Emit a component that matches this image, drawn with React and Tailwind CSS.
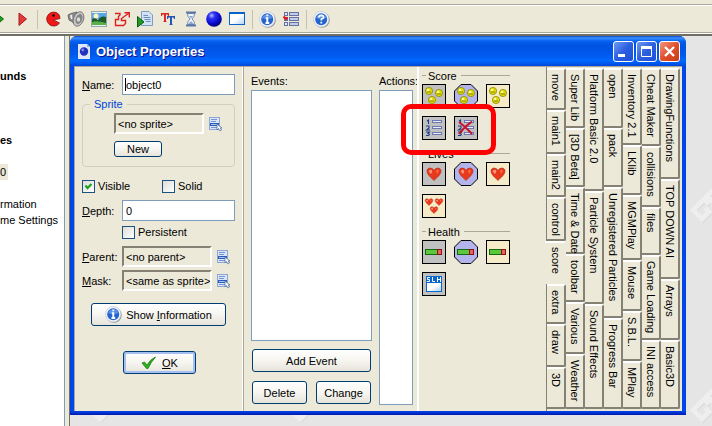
import React from "react";

/* ---------- toolbar drawings ---------- */

const Play = ({ fill, stroke }) => (
  <svg width="16" height="16" viewBox="0 0 16 16"><path d="M5 2 L12.500 8 L5 14.500 Z" fill={fill} stroke={stroke} /></svg>
);

const Pacman = () => (
  <svg width="16" height="16" viewBox="0 0 16 16">
    <path d="M13.500 3 A7 7 0 1 0 14.500 12 L8.500 9 L15 7.500 Q15 5 13.500 3 Z" fill="#f01818" stroke="#8a1010" strokeWidth="0.800" />
    <circle cx="8.500" cy="4.500" r="1.300" fill="#111" />
  </svg>
);

const Speaker = () => (
  <svg width="18" height="18" viewBox="0 0 18 18">
    <path d="M1 5 L4 3.500 L10 2 L8 14 L4 11 L2 10 Z" fill="#8c8c8c" stroke="#5a5a5a" strokeWidth="0.800" />
    <path d="M3 5.500 L5 4.500 L5.500 9 L4 9 Z" fill="#ededed" />
    <ellipse cx="11.500" cy="9" rx="5" ry="7.500" transform="rotate(22 11.500 9)" fill="#c6c6c6" stroke="#6a6a6a" strokeWidth="0.800" />
    <ellipse cx="12" cy="9" rx="3.200" ry="5.200" transform="rotate(22 12 9)" fill="#858585" />
    <ellipse cx="11.500" cy="9.500" rx="1.600" ry="2.200" fill="#dedede" />
  </svg>
);

const Picture = () => (
  <svg width="16" height="16" viewBox="0 0 16 16">
    <rect x="0.500" y="0.500" width="15" height="15" fill="#e8f0f4" stroke="#9aa8a8" />
    <rect x="1" y="2" width="14" height="6" fill="#58a8e8" />
    <circle cx="5" cy="5" r="2.500" fill="#fbf6c0" />
    <path d="M1 8 Q4 6 7 9 Q10 4 15 6 V12 H1 Z" fill="#1c5a2c" />
    <path d="M1 11 Q6 9 15 12 V14 H1 Z" fill="#58b048" />
  </svg>
);

const PathIcon = () => (
  <svg width="18" height="18" viewBox="0 0 18 18" fill="none" stroke="#e02020" strokeWidth="1.400">
    <path d="M2 3.500 H7 V5 L5.500 6.500 V9.500 H2.500 V15.500 H10.500 L12.500 13.500 V10.500 H8.500 V8.500 L16 3" />
    <path d="M11.500 2.700 H16.300 V7.500" />
  </svg>
);

const Script = () => (
  <svg width="16" height="18" viewBox="0 0 16 18">
    <path d="M4.500 1.500 H12 L15.500 5 V15.500 H4.500 Z" fill="#d4e2f6" stroke="#7d9cc4" />
    <path d="M6.500 5.500 H11 M6.500 7.500 H13.500 M7.500 9.500 H13.500 M9 11.500 H13.500" stroke="#6c8dbb" />
    <path d="M0.500 6.500 L7 12 L0.500 17 Z" fill="#1f9a22" stroke="#0d5a12" />
  </svg>
);

const FontIcon = () => (
  <svg width="16" height="16" viewBox="0 0 16 16">
    <path d="M1 2 H9 V5 H8 L7.500 3.500 H6 V10 L7 11 H3 L4 10 V3.500 H2.500 L2 5 H1 Z" fill="#dd2a20" />
    <path d="M7 5 H15 V8 H14 L13.500 6.500 H12 V13 L13 14 H9 L10 13 V6.500 H8.500 L8 8 H7 Z" fill="#2458b8" />
  </svg>
);

const Hourglass = () => (
  <svg width="16" height="16" viewBox="0 0 16 16">
    <path d="M4.500 2.500 Q4.500 6 7 8 Q4.500 10 4.500 13.500 H11.500 Q11.500 10 9 8 Q11.500 6 11.500 2.500 Z" fill="#f1f6ff" stroke="#7088b0" />
    <path d="M3 1.500 H13 M3 14.500 H13" stroke="#5c78a8" strokeWidth="2" />
    <path d="M6 5 H10 L8 7.500 Z M5.500 13 L8 10 L10.500 13 Z" fill="#8ca4cc" />
  </svg>
);

const Ball = () => (
  <svg width="16" height="16" viewBox="0 0 16 16">
    <defs>
      <radialGradient id="ball" cx="0.350" cy="0.280" r="0.750">
        <stop offset="0" stopColor="#b4b8ff" /><stop offset="0.280" stopColor="#2a32f0" /><stop offset="0.700" stopColor="#0808cc" /><stop offset="1" stopColor="#000070" />
      </radialGradient>
    </defs>
    <circle cx="8" cy="8" r="7.800" fill="url(#ball)" />
  </svg>
);

const RoomIcon = () => (
  <svg width="16" height="16" viewBox="0 0 16 16">
    <defs><linearGradient id="room" x1="0" y1="0" x2="1" y2="1"><stop offset="0.500" stopColor="#fff" /><stop offset="1" stopColor="#a9d2f2" /></linearGradient></defs>
    <rect x="0.500" y="1.500" width="15" height="12" fill="url(#room)" stroke="#0a62cc" />
    <path d="M0 2 H16" stroke="#0a62cc" strokeWidth="2" />
  </svg>
);

const Badge = ({ children }) => (
  <svg width="17" height="17" viewBox="0 0 17 17" className="shrink-0">
    <circle cx="9" cy="9" r="7.800" fill="#9a9a9a" />
    <circle cx="8.200" cy="8.200" r="7.700" fill="#f4f7fc" stroke="#b4c0d8" strokeWidth="0.600" />
    <circle cx="8.200" cy="8.200" r="6" fill="#2464cc" />
    <path d="M3 7 A5.500 5.500 0 0 1 13.500 7 Q8 9 3 7 Z" fill="#5a92e6" />
    {children}
  </svg>
);
const Info = () => <Badge><path d="M8.300 3.500 V5.300 M6.800 7.200 H8.300 V12 M6.500 12 H10.200" stroke="#fff" strokeWidth="1.900" fill="none" /></Badge>;
const Help = () => <Badge><path d="M5.800 6.500 Q5.900 4.300 8.200 4.300 Q10.600 4.400 10.500 6.300 Q10.300 7.500 8.300 8.300 V9.600 M8.300 10.800 V12.500" stroke="#fff" strokeWidth="1.700" fill="none" /></Badge>;

const Checklist = () => (
  <svg width="16" height="16" viewBox="0 0 16 16">
    {[1, 6, 11].map((y) => (
      <g key={y} fill="#dfe6f4" stroke="#6a70a4">
        <rect x="1.500" y={y + 0.500} width="3" height="3" />
        <rect x="6.500" y={y + 0.500} width="9" height="3" fill="#bdd0ea" />
      </g>
    ))}
    <path d="M0.500 5.500 L3 8 L4.500 6.500" stroke="#e01414" strokeWidth="2" fill="none" />
  </svg>
);

const TOOLBAR = [
  [["Debug step", <Play fill="#18a018" stroke="#0c6010" />], ["Debug", <Play fill="#e03a3a" stroke="#b01818" />]],
  [
    ["Create sprite", <Pacman />], ["Create sound", <Speaker />], ["Create background", <Picture />],
    ["Create path", <PathIcon />], ["Create script", <Script />], ["Create font", <FontIcon />],
    ["Create time line", <Hourglass />], ["Create object", <Ball />], ["Create room", <RoomIcon />],
  ],
  [["Game information", <Info />], ["Game settings", <Checklist />]],
  [["Help", <Help />]],
];

function Toolbar() {
  return (
    <header className="shrink-0 overflow-hidden border-b-2 border-[#716f64]">
      <div className="h-[4px]" />
      <div className="border-y border-[#aca899]">
        <div className="-ml-[13px] flex h-[27px] items-center border-t border-white">
          {TOOLBAR.map((group, g) => (
            <React.Fragment key={g}>
              {g > 0 && <div className="flex w-[8px] justify-center"><div className="h-[19px] w-px bg-[#c5c2b0]" /></div>}
              {group.map(([name, icon]) => (
                <button key={name} type="button" aria-label={name} className="flex h-[22px] w-[23px] shrink-0 items-center justify-center">{icon}</button>
              ))}
            </React.Fragment>
          ))}
        </div>
      </div>
      <div className="h-px bg-white" />
    </header>
  );
}

/* ---------- resource tree ---------- */

function ResourceTree() {
  return (
    <nav className="w-[65px] shrink-0 overflow-hidden whitespace-nowrap border-r border-[#7f9db9] bg-white pt-[32px] leading-[16px]">
      <div className="font-bold">unds</div>
      <div className="mt-[48px] font-bold">es</div>
      <div className="mt-[16px] flex"><span className="w-[8px] bg-[#ece9d8]">0</span></div>
      <div className="mt-[16px]">rmation</div>
      <div>me Settings</div>
    </nav>
  );
}

/* ---------- form parts ---------- */

const xpButton =
  "flex items-center justify-center rounded-[3px] border border-[#003c74] bg-linear-to-b from-white via-[#f6f5f0] to-[#e6e3da] ";

const MenuIcon = () => (
  <svg width="16" height="16" viewBox="0 0 16 16">
    <rect x="1.500" y="1.500" width="10" height="12" fill="#d8e4f8" stroke="#8ea6d4" />
    <path d="M3 3.500 H9 M3 5.500 H8 M3 11.500 H9" stroke="#7b96cc" />
    <rect x="2.500" y="7.500" width="8" height="2" fill="#a8c4f4" stroke="#2c5cb8" />
    <path d="M9 8 L9 14 L10.500 12.500 L12 15 L13.500 14 L12.200 12 H14 Z" fill="#fff" stroke="#5570a8" strokeWidth="0.800" />
  </svg>
);

function PickField({ label, value }) {
  return (
    <div className="flex items-center gap-[4px]">
      <input readOnly aria-label={label} value={value} className="h-[21px] w-[90px] border-2 border-b-white border-l-[#858275] border-r-white border-t-[#858275] bg-[#ece9d8] pl-[2px] outline-none" />
      <button type="button" aria-label={`Choose ${label}`}><MenuIcon /></button>
    </div>
  );
}

function Check({ label, checked }) {
  return (
    <label className="flex items-center gap-[3px]">
      <span className="grid">
        <input type="checkbox" defaultChecked={checked} className="peer col-start-1 row-start-1 size-[13px] appearance-none border border-[#1c5180] bg-linear-to-br from-[#dcdcd7] to-white" />
        <svg viewBox="0 0 13 13" className="pointer-events-none invisible col-start-1 row-start-1 size-[13px] peer-checked:visible">
          <path d="M3.500 5.500 L5.500 8 L9.500 4" fill="none" stroke="#21a121" strokeWidth="2.200" />
        </svg>
      </span>
      {label}
    </label>
  );
}

const textInput = "h-[21px] w-[113px] border border-[#7f9db9] bg-white pl-[3px] outline-none";

function PropertiesPane() {
  return (
    <form className="w-[168px] shrink-0 border-r border-white pl-[7px] pt-[7px]">
      <div className="flex items-center">
        <label htmlFor="name" className="w-[40px]"><u>N</u>ame:</label>
        <div className="relative">
          <input id="name" defaultValue="object0" className={textInput} />
          <span className="absolute left-[3px] top-[4px] h-[13px] w-px bg-black" />
        </div>
      </div>

      <fieldset className="mt-[2px] h-[70px] w-[153px] rounded-[4px] border border-[#d0d0bf] pl-[31px]">
        <legend className="-ml-[24px] px-[4px] leading-[14px] text-[#0046d5]">Sprite</legend>
        <div className="mt-[2px]"><PickField label="sprite" value="<no sprite>" /></div>
        <button type="button" className={xpButton + "mt-[7px] h-[16px] w-[48px]"}>New</button>
      </fieldset>

      <div className="mt-[12px] flex">
        <div className="w-[80px]"><Check label="Visible" checked /></div>
        <Check label="Solid" />
      </div>

      <div className="mt-[7px] flex items-center">
        <label htmlFor="depth" className="w-[40px]"><u>D</u>epth:</label>
        <input id="depth" defaultValue="0" className={textInput} />
      </div>
      <div className="ml-[40px] mt-[4px]"><Check label="Persistent" /></div>

      <div className="mt-[7px] flex items-center"><span className="w-[40px]"><u>P</u>arent:</span><PickField label="parent" value="<no parent>" /></div>
      <div className="mt-[3px] flex items-center"><span className="w-[40px]"><u>M</u>ask:</span><PickField label="mask" value="<same as sprite>" /></div>

      <button type="button" className={xpButton + "ml-[9px] mt-[12px] h-[23px] w-[135px] gap-[4px]"}>
        <Info /><span>Show <u>I</u>nformation</span>
      </button>
      <button type="submit" className={xpButton + "ml-[41px] mt-[25px] h-[23px] w-[73px] gap-[5px] shadow-[inset_0_0_0_2px_#a4c0f0]"}>
        <svg width="16" height="14" viewBox="0 0 16 14"><path d="M1 7 L3.500 6 L6 9 Q9 3.500 14.500 1 Q10 6 7 12.500 H5.500 Z" fill="#2fb01c" stroke="#1d7a12" strokeWidth="0.800" /></svg>
        <span><u>O</u>K</span>
      </button>
    </form>
  );
}

function EventsPane() {
  const list = "min-h-0 flex-1 appearance-none overflow-hidden border border-[#7f9db9] bg-white outline-none";
  return (
    <section className="flex w-[174px] shrink-0 justify-between border-l border-[#aca899] pb-[6px] pl-[7px] pr-[4px] pt-[6px]">
      <div className="flex w-[121px] flex-col pb-px">
        <label htmlFor="events" className="mb-px leading-[16px]">Events:</label>
        <select id="events" multiple className={list} />
        <button type="button" className={xpButton + "mx-px mt-[8px] h-[23px]"}>Add Event</button>
        <div className="mx-px mt-[9px] flex justify-between">
          <button type="button" className={xpButton + "h-[23px] w-[55px]"}>Delete</button>
          <button type="button" className={xpButton + "h-[23px] w-[55px]"}>Change</button>
        </div>
      </div>
      <div className="flex w-[34px] flex-col">
        <label htmlFor="actions" className="mb-px whitespace-nowrap leading-[16px]">Actions:</label>
        <select id="actions" multiple className={list} />
      </div>
    </section>
  );
}

/* ---------- action palette ---------- */

const Coin = ({ x, y }) => (
  <g>
    <circle cx={x} cy={y} r="3.600" fill="#e0dc00" stroke="#8c8808" strokeWidth="0.800" />
    <circle cx={x - 0.900} cy={y - 1.100} r="1.200" fill="#ffffb0" />
    <path d={`M${x - 2} ${y + 1} h4`} stroke="#77740a" strokeWidth="0.800" />
  </g>
);
const Coins = () => (
  <>{[[7, 7], [17, 9], [10, 16]].map(([x, y]) => <Coin key={x} x={x} y={y} />)}</>
);

const heartPath = "M0 6.500 C-3 3.500 -7 0.500 -7 -3 C-7 -6.500 -2 -7 0 -3.500 C2 -7 7 -6.500 7 -3 C7 0.500 3 3.500 0 6.500 Z";
const Heart = ({ x = 12, y = 12, s = 1 }) => (
  <g transform={`translate(${x} ${y}) scale(${s})`}>
    <path d={heartPath} fill="#e8391c" stroke="#b82c18" strokeWidth="0.700" />
    <path d="M-5.500 -2.500 Q-4.500 -5 -2 -4 Q-1 -2 -3 0 Z" fill="#ff9078" />
    <path d="M2 -3.500 Q4 -5 5 -3 L3 0 Z" fill="#ff6a48" />
  </g>
);
const Hearts = () => <><Heart x={7} y={8} s={0.55} /><Heart x={17} y={8} s={0.55} /><Heart x={12} y={16} s={0.55} /></>;
const Bar = () => (
  <>
    <rect x="3.500" y="9.500" width="12" height="5" fill="#5cc83c" stroke="#126a14" />
    <rect x="15.500" y="9.500" width="4" height="5" fill="#e86060" stroke="#8c1010" />
  </>
);
const Rows = () => (
  <>
    <path d="M5 5 L6.500 4 V8 M4 10 H7 V12 L4.500 14 H8 M4 16 H7.500 L6 17.500 Q8.500 18 6.500 19.500 H4" fill="none" stroke="#1c3c8c" strokeWidth="1.100" />
    {[4.5, 10.5, 16.5].map((y) => <rect key={y} x="10.500" y={y} width="9" height="2" fill="#e4ecfa" stroke="#7078b0" />)}
  </>
);
const ClearRows = () => <><Rows /><path d="M5 6 Q12 11 18 18 M18 5.500 Q10 11 5 18" stroke="#c41430" strokeWidth="2" fill="none" /></>;
const Caption = () => (
  <>
    <rect x="4" y="4" width="16" height="16" fill="#0866cc" />
    <rect x="5" y="11" width="14" height="8" fill="url(#room)" />
    <path d="M8 5.500 H5.500 V7.500 H7.500 V9.500 H5 M10.500 5 V9.500 H13 M15.500 5 V10 M18.500 5 V10 M15.500 7.500 H18.500" fill="none" stroke="#fff" />
  </>
);

const FRAMES = {
  gray: <rect x="0.500" y="0.500" width="23" height="23" fill="#c0c0c0" stroke="#000" />,
  octagon: <path d="M7 0.500 H17 L23.500 7 V17 L17 23.500 H7 L0.500 17 V7 Z" fill="#b4b4ec" stroke="#000" />,
  yellow: <rect x="0.500" y="0.500" width="23" height="23" fill="#f5ebc8" stroke="#000" />,
};

const PALETTE = [
  { title: "Score", rows: [
    [["Set Score", "gray", Coins], ["Test Score", "octagon", Coins], ["Draw Score", "yellow", Coins]],
    [["Show Highscore", "gray", Rows], ["Clear Highscore", "gray", ClearRows]],
  ] },
  { title: "Lives", rows: [
    [["Set Lives", "gray", Heart], ["Test Lives", "octagon", Heart], ["Draw Lives", "yellow", Heart]],
    [["Draw Life Images", "yellow", Hearts]],
  ] },
  { title: "Health", rows: [
    [["Set Health", "gray", Bar], ["Test Health", "octagon", Bar], ["Draw Health", "yellow", Bar]],
    [["Score Caption", "gray", Caption]],
  ] },
];

function PalettePane() {
  return (
    <section className="relative min-w-0 flex-1 border-l-2 border-white pl-[3px]">
      {PALETTE.map((group) => (
        <div key={group.title} className="mb-[5px]">
          <h3 className="flex h-[17px] w-[88px] items-center gap-[2px]">
            <span className="h-px w-[4px] bg-[#aca899]" />
            {group.title}
            <span className="ml-[2px] h-px flex-1 bg-[#aca899]" />
          </h3>
          <div className="flex flex-col gap-[8px]">
            {group.rows.map((row, r) => (
              <div key={r} className="flex gap-[8px]">
                {row.map(([name, frame, Drawing]) => (
                  <button key={name} type="button" aria-label={name}>
                    <svg width="24" height="24" viewBox="0 0 24 24">{FRAMES[frame]}<Drawing /></svg>
                  </button>
                ))}
              </div>
            ))}
          </div>
        </div>
      ))}
      <div className="pointer-events-none absolute -left-[18px] top-[37px] h-[51px] w-[95px] rounded-[10px] border-[5px] border-[#fe0000]" />
    </section>
  );
}

/* ---------- vertical tab columns: [label, share of the column height] ---------- */

const TABS = [
  [["move", 42], ["main1", 43], ["main2", 43], ["control", 44], ["score", 45], ["extra", 40], ["draw", 42], ["3D", 42]],
  [["Super Lib", 60], ["[3D Beta]", 60], ["Time & Date", 68], ["toolbar", 47], ["Various", 51], ["Weather", 55]],
  [["Platform Basic 2.0", 124], ["Particle System", 113], ["Sound Effects", 104]],
  [["open", 57], ["pack", 57], ["Unregistered Particles", 135], ["Progress Bar", 92]],
  [["Inventory 2.1", 80], ["LKlib", 49], ["MGMPlay", 66], ["Mouse", 51], ["S.B.L.", 48], ["MPlay", 47]],
  [["Cheat Maker", 79], ["collisions", 60], ["files", 46], ["Game Loading", 87], ["INI access", 69]],
  [["DrawingFunctions", 114], ["TOP DOWN AI", 101], ["Arrays", 59], ["Basic3D", 67]],
];

function TabStrip() {
  return (
    <div role="tablist" aria-orientation="vertical" className="flex shrink-0 border-l border-[#858275] pb-[2px] pr-[2px] pt-px">
      {TABS.map((column, c) => (
        <div key={c} className="flex w-[19px] flex-col">
          {column.map(([label, share]) => {
            const active = label === "score";
            return (
              <button
                key={label}
                type="button"
                role="tab"
                aria-selected={active}
                style={{ flexGrow: share }}
                className={
                  "flex min-h-0 basis-0 items-center justify-start whitespace-nowrap rounded-r-[2px] border-t-2 border-t-white pt-[4px] leading-[16px] [writing-mode:vertical-rl] " +
                  (active
                    ? "-ml-[2px] border-r-2 border-r-[#ece9d8] bg-[#ece9d8] pl-[2px]"
                    : "border-b-2 border-r-2 border-b-[#858275] border-r-[#858275]")
                }
              >
                {label}
              </button>
            );
          })}
        </div>
      ))}
    </div>
  );
}

/* ---------- window ---------- */

const captionButton = "flex size-[21px] items-center justify-center rounded-[3px] border border-white bg-linear-to-br ";

function TitleBar() {
  return (
    <div className="flex h-[30px] items-center bg-[linear-gradient(#0a45c8_0,#3c92ff_2px,#0560f0_5px,#0053e1_10px,#0058ec_18px,#0068ff_25px,#0046d8_30px)] pl-[8px] pr-[6px]">
      <svg width="12" height="15" viewBox="0 0 12 15">
        <path d="M0 0 H9 L12 3 V15 H0 Z" fill="#dfe6f8" />
        <path d="M9 0 L12 3 H9 Z" fill="#9cb0dc" />
        <circle cx="6" cy="7.500" r="4.200" fill="#2230c0" />
        <circle cx="4.800" cy="6" r="1.400" fill="#7c88ee" />
      </svg>
      <h1 className="flex-1 pl-[6px] pt-[2px] text-[13px] font-bold text-white [text-shadow:1px_1px_#0f1089]">Object Properties</h1>
      <div className="flex gap-[2px]">
        <button type="button" aria-label="Minimize" className={captionButton + "from-[#6f98f4] via-[#2c5ee0] to-[#1c50d8]"}>
          <svg width="13" height="13" viewBox="0 0 13 13"><path d="M1 10.500 H8" stroke="#fff" strokeWidth="3" /></svg>
        </button>
        <button type="button" aria-label="Maximize" className={captionButton + "from-[#6f98f4] via-[#2c5ee0] to-[#1c50d8]"}>
          <svg width="13" height="13" viewBox="0 0 13 13" fill="none" stroke="#fff"><path d="M1.500 2 V11.500 H11.500 V2" /><path d="M1 2.500 H12" strokeWidth="3" /></svg>
        </button>
        <button type="button" aria-label="Close" className={captionButton + "from-[#f09478] via-[#e0502c] to-[#c83c14]"}>
          <svg width="13" height="13" viewBox="0 0 13 13"><path d="M2 2 L11 11 M11 2 L2 11" stroke="#fff" strokeWidth="2.400" /></svg>
        </button>
      </div>
    </div>
  );
}

const Watermark = ({ className }) => (
  <svg width="60" height="60" viewBox="0 0 60 60" aria-hidden="true" className={"absolute " + className}>
    <g fill="none" stroke="#dcdcdc" strokeWidth="5" transform="translate(1 1)"><path d="M19 17 L14 12 L3 23 L12 32 L19 25 L15 21 M33 3 L28 -2 L17 9 L26 18 L33 11 L29 7" /></g>
    <g fill="none" stroke="#eeeeee" strokeWidth="5"><path d="M19 17 L14 12 L3 23 L12 32 L19 25 L15 21 M33 3 L28 -2 L17 9 L26 18 L33 11 L29 7" /></g>
  </svg>
);

export default function App() {
  return (
    <div className="flex min-h-screen flex-col bg-[#ece9d8] font-['Liberation_Sans',Arial,sans-serif] text-[11px] leading-[14px] text-black">
      <Toolbar />
      <div className="flex flex-1">
        <ResourceTree />
        <div className="w-[4px] shrink-0" />
        <main className="relative min-w-0 flex-1 overflow-hidden border-l border-[#716f64] bg-[#e5e5e5] pr-[26px]">
          <Watermark className="left-[18px] top-[351px]" />
          <Watermark className="left-[218px] top-[351px]" />
          <Watermark className="-right-[38px] top-[151px]" />
          <Watermark className="-right-[38px] top-[351px]" />
          <div className="relative overflow-hidden rounded-t-[7px] bg-[#0831d9]">
            <TitleBar />
            <div className="px-[4px] pb-[4px] [background:linear-gradient(#0046e8,#0019b0)_bottom/100%_4px_no-repeat,#0046e8]">
              <div className="flex min-h-[345px] border-l border-t border-[#aca899] bg-[#ece9d8]">
                <PropertiesPane />
                <EventsPane />
                <PalettePane />
                <TabStrip />
              </div>
            </div>
          </div>
        </main>
      </div>
    </div>
  );
}
